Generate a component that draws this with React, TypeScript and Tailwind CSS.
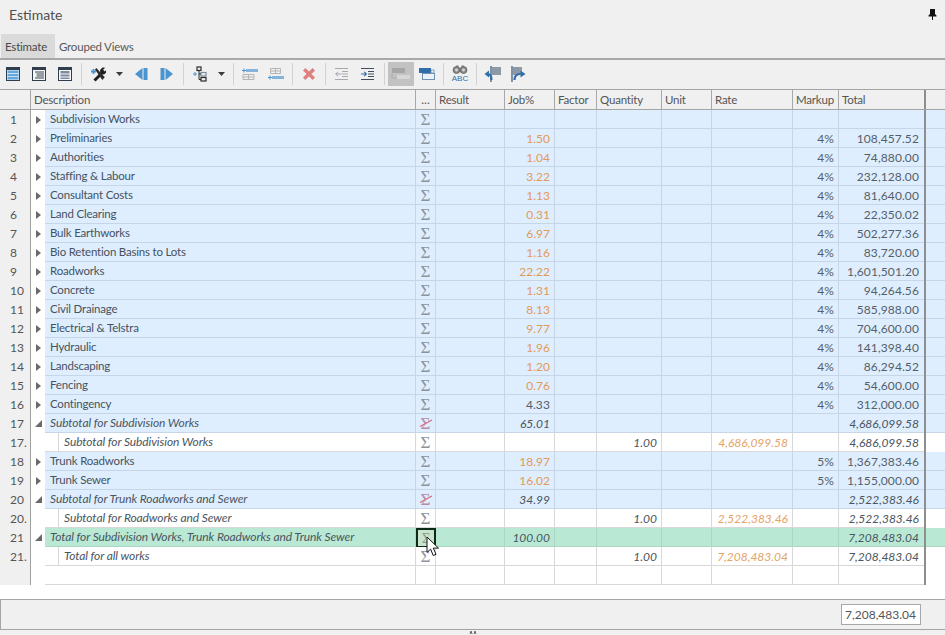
import React from "react";

const GRID = "grid grid-cols-[31px_14px_371px_20px_69px_50px_42px_65px_50px_81px_46px_85px_2px_19px] h-[19px]";
const LABEL = "text-[11.5px] tracking-[-0.2px]";

type Kind = "group" | "sub" | "detail" | "total" | "empty";
type Row = { n: string; d?: string; k: Kind; job?: string; jobOrange?: boolean; res?: string; qty?: string; rate?: string; mk?: string; tot?: string; red?: boolean };

const g = (n: string, d: string, job: string, tot: string, mk = "4%", jobOrange = true): Row => ({ n, d, k: "group", job, tot, mk, jobOrange });

const rows: Row[] = [
  { n: "1", d: "Subdivision Works", k: "group" },
  g("2", "Preliminaries", "1.50", "108,457.52"),
  g("3", "Authorities", "1.04", "74,880.00"),
  g("4", "Staffing & Labour", "3.22", "232,128.00"),
  g("5", "Consultant Costs", "1.13", "81,640.00"),
  g("6", "Land Clearing", "0.31", "22,350.02"),
  g("7", "Bulk Earthworks", "6.97", "502,277.36"),
  g("8", "Bio Retention Basins to Lots", "1.16", "83,720.00"),
  g("9", "Roadworks", "22.22", "1,601,501.20"),
  g("10", "Concrete", "1.31", "94,264.56"),
  g("11", "Civil Drainage", "8.13", "585,988.00"),
  g("12", "Electrical & Telstra", "9.77", "704,600.00"),
  g("13", "Hydraulic", "1.96", "141,398.40"),
  g("14", "Landscaping", "1.20", "86,294.52"),
  g("15", "Fencing", "0.76", "54,600.00"),
  g("16", "Contingency", "4.33", "312,000.00", "4%", false),
  { n: "17", d: "Subtotal for Subdivision Works", k: "sub", job: "65.01", tot: "4,686,099.58", red: true },
  { n: "17.", d: "Subtotal for Subdivision Works", k: "detail", qty: "1.00", rate: "4,686,099.58", tot: "4,686,099.58" },
  g("18", "Trunk Roadworks", "18.97", "1,367,383.46", "5%"),
  g("19", "Trunk Sewer", "16.02", "1,155,000.00", "5%"),
  { n: "20", d: "Subtotal for Trunk Roadworks and Sewer", k: "sub", job: "34.99", tot: "2,522,383.46", red: true },
  { n: "20.", d: "Subtotal for Roadworks and Sewer", k: "detail", qty: "1.00", rate: "2,522,383.46", tot: "2,522,383.46" },
  { n: "21", d: "Total for Subdivision Works, Trunk Roadworks and Trunk Sewer", k: "total", job: "100.00", tot: "7,208,483.04" },
  { n: "21.", d: "Total for all works", k: "detail", qty: "1.00", rate: "7,208,483.04", tot: "7,208,483.04" },
  { n: "", k: "empty" },
];

const Svg = ({ children, w = 16, h = 16 }: { children: React.ReactNode; w?: number; h?: number }) => (
  <svg width={w} height={h} viewBox={`0 0 ${w} ${h}`} className="block">{children}</svg>
);

const DARK = "#2f3d4c";
const BLUE = "#4a94cf";
const LIGHTBLUE = "#62a8dc";
const MID = "#7c8da0";

const ListA = () => (
  <Svg>
    <rect x="1" y="1" width="14" height="14" fill={DARK} />
    <rect x="2" y="4" width="12" height="10" fill="#e8f2fa" />
    <rect x="2.5" y="4.5" width="11" height="2.5" fill={LIGHTBLUE} />
    <rect x="2.5" y="7.8" width="11" height="2.5" fill={LIGHTBLUE} />
    <rect x="2.5" y="11" width="11" height="2.5" fill={LIGHTBLUE} />
  </Svg>
);
const ListB = () => (
  <Svg>
    <rect x="1" y="1" width="14" height="14" fill={DARK} />
    <rect x="2" y="4" width="12" height="10" fill="#f6f6f6" />
    <path d="M4 6h9M5.5 8h7.5M5.5 10h7.5M4 12h9" stroke="#3a4654" strokeWidth="1" />
  </Svg>
);
const ListC = () => (
  <Svg>
    <rect x="1" y="1" width="14" height="14" fill={DARK} />
    <rect x="2" y="4" width="12" height="10" fill="#f6f6f6" />
    <rect x="3.5" y="5" width="9" height="2.5" fill={MID} />
    <rect x="3.5" y="8.5" width="9" height="2" fill={MID} />
    <rect x="3.5" y="11.5" width="9" height="1.5" fill={MID} />
  </Svg>
);
const Tools = () => (
  <Svg>
    <path d="M1 5.5h5M3.5 3v5" stroke={BLUE} strokeWidth="1.8" />
    <path d="M4.5 14.5L13 6" stroke="#1e1e1e" strokeWidth="3" />
    <path d="M10.5 7.5L10 4 12.5 1.5l2.6.3-2 2 1.6 1.6 2-1.8-.1 2.6-2.6 2.4z" fill="#1e1e1e" />
    <path d="M5 3.5l1.4-1.4 8.3 9.2-2.4 2.6z" fill="#2a2a2a" />
  </Svg>
);
const Caret = () => (
  <svg width="7" height="4" viewBox="0 0 7 4" className="block"><path d="M0 0h7L3.5 4z" fill="#3c3c3c" /></svg>
);
const PrevI = () => (
  <Svg>
    <path d="M9.5 2v12L2 8z" fill={BLUE} />
    <rect x="10.5" y="2" width="4" height="12" fill={BLUE} />
  </Svg>
);
const NextI = () => (
  <Svg>
    <rect x="1.5" y="2" width="4" height="12" fill={BLUE} />
    <path d="M6.5 2v12L14 8z" fill={BLUE} />
  </Svg>
);
const Tree = () => (
  <Svg>
    <rect x="5" y="1" width="4" height="3.5" fill="none" stroke="#2b2b2b" strokeWidth="1.2" />
    <rect x="9" y="6.5" width="5" height="3.5" fill="none" stroke={MID} strokeWidth="1.2" />
    <rect x="9" y="11.5" width="5" height="3.5" fill="none" stroke="#2b2b2b" strokeWidth="1.2" />
    <path d="M7 4.5V13.5H9M7 8H9" fill="none" stroke="#2b2b2b" strokeWidth="1" />
    <path d="M1 8h4M3 6v4" stroke={BLUE} strokeWidth="1" />
  </Svg>
);
const InsAbove = () => (
  <Svg>
    <path d="M0 4.5h4M2 2.5v4" stroke={BLUE} strokeWidth="1" />
    <rect x="4" y="3" width="12" height="3" fill={BLUE} opacity="0.65" />
    <path d="M1 8.5h11v5H1zM1 11h11M6.5 8.5v5" fill="none" stroke="#b4b4b4" strokeWidth="1" />
  </Svg>
);
const InsBelow = () => (
  <Svg>
    <path d="M2.5 2.5h10v5h-10zM2.5 5h10M7.5 2.5v5" fill="none" stroke="#b4b4b4" strokeWidth="1" />
    <path d="M0 11.5h4M2 9.5v4" stroke={BLUE} strokeWidth="1" />
    <rect x="4" y="10" width="12" height="3" fill={BLUE} opacity="0.65" />
  </Svg>
);
const Del = () => (
  <Svg>
    <path d="M3.2 3.2l9.6 9.6M12.8 3.2l-9.6 9.6" stroke="#de8080" strokeWidth="3.4" />
  </Svg>
);
const Outdent = () => (
  <Svg>
    <path d="M1 2.5h13M8 5.5h6M8 8h6M8 10.5h6M1 13.5h13" stroke="#a9a9a9" strokeWidth="1" />
    <path d="M1.5 8h6M4 5.8L1.8 8 4 10.2" fill="none" stroke="#9aa6b2" strokeWidth="1" />
  </Svg>
);
const Indent = () => (
  <Svg>
    <path d="M1 2.5h13M8 5.5h6M8 8h6M8 10.5h6M1 13.5h13" stroke="#44505e" strokeWidth="1" />
    <path d="M1 8h5.5M4.2 5.8L6.4 8 4.2 10.2" fill="none" stroke="#2f6ea8" strokeWidth="1.1" />
  </Svg>
);
const ActiveI = () => (
  <Svg w={20} h={16}>
    <rect x="1" y="2" width="13" height="5" fill="#a6a6a6" />
    <rect x="6" y="9" width="13" height="4" fill="#d6d6d6" />
    <path d="M1 7v5h5" fill="none" stroke="#adadad" />
  </Svg>
);
const NextBar = () => (
  <Svg>
    <rect x="0" y="2" width="12" height="5" fill="#2f6ea8" />
    <rect x="3.5" y="7.5" width="12" height="6" fill="#eef2f6" stroke="#6f92b4" />
    <rect x="12" y="4" width="3" height="3" fill="none" stroke="#6f92b4" strokeWidth="0.8" />
  </Svg>
);
const Binoc = () => (
  <svg width="18" height="20" viewBox="0 0 18 20" className="block">
    <circle cx="5.5" cy="6" r="3.4" fill="#8a8a8a" stroke="#6a6a6a" strokeWidth="1" />
    <circle cx="12.5" cy="6" r="3.4" fill="#8a8a8a" stroke="#6a6a6a" strokeWidth="1" />
    <circle cx="5.5" cy="6" r="1.4" fill="#d8d8d8" />
    <circle cx="12.5" cy="6" r="1.4" fill="#d8d8d8" />
    <path d="M5 1.5h2.5v2H5zM10.5 1.5H13v2h-2.5z" fill="#777" />
    <text x="9" y="17" textAnchor="middle" fontSize="8" fontFamily="'Liberation Sans',sans-serif" fill="#2f6ea8">ABC</text>
  </svg>
);
const FlagL = () => (
  <Svg w={18} h={18}>
    <path d="M8 2h9v8H8z" fill="#8c9aa8" />
    <path d="M7 1v16" stroke="#4e6a86" strokeWidth="1.4" />
    <path d="M7.5 15c0-4-1-6-4-6" fill="none" stroke="#2f6ea8" strokeWidth="2.2" />
    <path d="M0.5 9l4.5-3.5v7z" fill="#2f6ea8" />
  </Svg>
);
const FlagR = () => (
  <Svg w={18} h={18}>
    <path d="M3 2h9v8H3z" fill="#8c9aa8" />
    <path d="M2 1v16" stroke="#4e6a86" strokeWidth="1.4" />
    <path d="M4.5 15c0-4 2-6 6-6" fill="none" stroke="#2f6ea8" strokeWidth="2.2" />
    <path d="M15.5 9l-5-3.5v7z" fill="#2f6ea8" />
  </Svg>
);

const Btn = ({ children, active }: { children: React.ReactNode; active?: boolean }) => (
  <div className={active ? "w-[26px] h-[24px] flex items-center justify-center bg-[#c2c2c2]" : "w-[26px] h-[24px] flex items-center justify-center"}>{children}</div>
);
const CaretBtn = () => <div className="w-[17px] h-[24px] flex items-center justify-center"><Caret /></div>;
const Sep = () => <div className="w-px h-[22px] mx-[3px] bg-[#d2d2d2]" />;

const Sigma = ({ red }: { red?: boolean }) => (
  <span className="relative flex items-center justify-center w-full h-full">
    <span className={red ? "text-[17px] leading-none text-[#b48ea6] font-['Liberation_Serif',serif]" : "text-[17px] leading-none text-[#8a949e] font-['Liberation_Serif',serif]"}>Σ</span>
    {red && (
      <svg width="14" height="10" viewBox="0 0 14 10" className="absolute left-[3px] top-[4px]">
        <path d="M1 8.5L13 2" stroke="#d86a7a" strokeWidth="1.2" />
      </svg>
    )}
  </span>
);

const Cursor = () => (
  <svg width="15" height="22" viewBox="0 0 15 22" className="absolute left-[8px] top-[6px] z-10">
    <path d="M1 1v15.5l3.6-3.4 2.6 6.4 2.8-1.2-2.7-6.2h5.2z" fill="#fff" stroke="#111" strokeWidth="1" />
  </svg>
);

const HCell = ({ t, span }: { t: string; span?: boolean }) => (
  <div className={span ? `col-span-2 border-r border-[#a8a8a8] pl-[3px] pt-px flex items-center ${LABEL}` : `border-r border-[#a8a8a8] pl-[3px] pt-px flex items-center ${LABEL}`}>{t}</div>
);

function TableRow({ r }: { r: Row }) {
  const palette: Record<Kind, string> = {
    group: "bg-[#deeefe] border-b border-[#c6d6e6]",
    sub: "bg-[#deeefe] border-b border-[#c6d6e6]",
    total: "bg-[#b9e9d4] border-b border-[#a8d8c4]",
    detail: "bg-white border-b border-[#d8d8d8]",
    empty: "bg-white border-b border-[#d8d8d8]",
  };
  const rule: Record<Kind, string> = {
    group: "border-r border-[#c6d6e6]",
    sub: "border-r border-[#c6d6e6]",
    total: "border-r border-[#a8d8c4]",
    detail: "border-r border-[#d8d8d8]",
    empty: "border-r border-[#d8d8d8]",
  };
  const bg = palette[r.k];
  const cell = `${bg} ${rule[r.k]} flex items-center justify-end pr-[4px] pt-px`;
  const italic = r.k !== "group";
  const num = italic ? "italic text-[#4a5560]" : "text-[#555f6a] tracking-[0.1px]";
  const orange = italic ? "italic text-[#e4a468]" : "text-[#e39a58]";
  const descColor = italic ? "italic tracking-[-0.1px] text-[#4b5560]" : `${LABEL} text-[#465260]`;
  const selected = r.k === "total";

  return (
    <div className={GRID}>
      <div className="bg-[#f0f0f0] border-r border-[#a0a0a0] pl-[10px] pt-px flex items-center text-[#555]">{r.n}</div>
      <div className="bg-white flex items-center justify-center">
        {r.k === "group" && (
          <svg width="5" height="8" viewBox="0 0 5 8" className="block ml-[1px]"><path d="M0 0l5 4-5 4z" fill="#6a6a6a" /></svg>
        )}
        {(r.k === "sub" || r.k === "total") && (
          <svg width="7" height="7" viewBox="0 0 7 7" className="block ml-[1px]"><path d="M7 0v7H0z" fill="#6a6a6a" /></svg>
        )}
      </div>
      {r.k === "detail" ? (
        <div className="bg-white border-r border-b border-[#d8d8d8] flex">
          <div className="w-[14px] shrink-0 border-r border-[#d8d8d8]" />
          <div className={`pl-[5px] flex items-center whitespace-nowrap ${descColor}`}>{r.d}</div>
        </div>
      ) : (
        <div className={`${bg} ${rule[r.k]} pl-[5px] flex items-center whitespace-nowrap ${descColor}`}>{r.d}</div>
      )}
      <div className={`${bg} ${rule[r.k]} relative`}>
        {r.k !== "empty" && !selected && <Sigma red={r.red} />}
        {selected && (
          <div className="absolute left-0 top-0 w-[20px] h-[20px] border-2 border-[#0c2a14] bg-[#c8e4d0] flex items-center justify-center">
            <span className="text-[15px] leading-none text-[#8aa080] font-['Liberation_Serif',serif]">Σ</span>
            <Cursor />
          </div>
        )}
      </div>
      <div className={cell} />
      <div className={`${cell} ${r.jobOrange ? orange : num}`}>{r.job}</div>
      <div className={cell} />
      <div className={`${cell} ${num}`}>{r.qty}</div>
      <div className={cell} />
      <div className={`${cell} ${orange}`}>{r.rate}</div>
      <div className={`${cell} ${num}`}>{r.mk}</div>
      <div className={`${bg} flex items-center justify-end pr-[5px] pt-px ${num}`}>{r.tot}</div>
      <div className="bg-[#8e8e8e]" />
      <div className={r.k === "detail" || r.k === "empty" ? "bg-white" : bg} />
    </div>
  );
}

export default function App() {
  return (
    <div className="w-[945px] h-[635px] overflow-hidden bg-[#f0f0f0] flex flex-col text-[12px] leading-none text-[#444] font-['Lato','Open_Sans',sans-serif]">
      <div className="h-[34px] flex items-center justify-between pl-[9px] pr-[8px] shrink-0">
        <span className="text-[14px] text-[#505050] mt-[-4px]">Estimate</span>
        <svg width="9" height="11" viewBox="0 0 9 11" className="block mt-[-6px]">
          <path d="M2 0h5v5l1.5 1.5v1H5V11H4V7.5H.5v-1L2 5z" fill="#111" />
        </svg>
      </div>
      <div className="h-[26px] flex border-b-2 border-[#a8a8a8] shrink-0">
        <div className={`ml-px w-[54px] h-[24px] bg-[#dadada] flex items-center pl-[4px] pt-[2px] text-[#4a4a4a] ${LABEL}`}>Estimate</div>
        <div className={`ml-[4px] h-[24px] flex items-center pt-[2px] text-[#585858] ${LABEL}`}>Grouped Views</div>
      </div>
      <div className="h-[30px] flex items-center pb-[2px] shrink-0 border-b border-[#a4a4a4]">
        <Btn><ListA /></Btn>
        <Btn><ListB /></Btn>
        <Btn><ListC /></Btn>
        <Sep />
        <Btn><Tools /></Btn>
        <CaretBtn />
        <Btn><PrevI /></Btn>
        <Btn><NextI /></Btn>
        <Sep />
        <Btn><Tree /></Btn>
        <CaretBtn />
        <Sep />
        <Btn><InsAbove /></Btn>
        <Btn><InsBelow /></Btn>
        <Sep />
        <Btn><Del /></Btn>
        <Sep />
        <Btn><Outdent /></Btn>
        <Btn><Indent /></Btn>
        <Sep />
        <Btn active><ActiveI /></Btn>
        <Btn><NextBar /></Btn>
        <Sep />
        <Btn><Binoc /></Btn>
        <Sep />
        <Btn><FlagL /></Btn>
        <Btn><FlagR /></Btn>
      </div>
      <div className="flex-1 bg-white flex flex-col">
        <div className="grid grid-cols-[31px_14px_371px_20px_69px_50px_42px_65px_50px_81px_46px_85px_2px_19px] h-[20px] bg-[#f0f0f0] border-b border-[#a4a4a4] text-[#555] box-border">
          <HCell t="" />
          <HCell t="Description" span />
          <div className="border-r border-[#a8a8a8] flex items-center justify-center">...</div>
          <HCell t="Result" />
          <HCell t="Job%" />
          <HCell t="Factor" />
          <HCell t="Quantity" />
          <HCell t="Unit" />
          <HCell t="Rate" />
          <HCell t="Markup" />
          <div className={`pl-[3px] pt-px flex items-center ${LABEL}`}>Total</div>
          <div className="bg-[#8e8e8e]" />
          <div />
        </div>
        {rows.map((r, i) => <TableRow key={i} r={r} />)}
      </div>
      <div className="h-[31px] shrink-0 border-y border-l border-[#a4a4a4] flex items-center justify-end pr-[24px]">
        <div className="w-[80px] h-[21px] bg-white border border-[#a8a8a8] flex items-center justify-end pr-[4px] text-[#555]">7,208,483.04</div>
      </div>
      <div className="h-[5px] shrink-0 flex justify-center">
        <svg width="8" height="5" viewBox="0 0 8 5" className="block"><path d="M1 4l1-3 1 3M5 4l1-3 1 3" fill="none" stroke="#666" /></svg>
      </div>
    </div>
  );
}
